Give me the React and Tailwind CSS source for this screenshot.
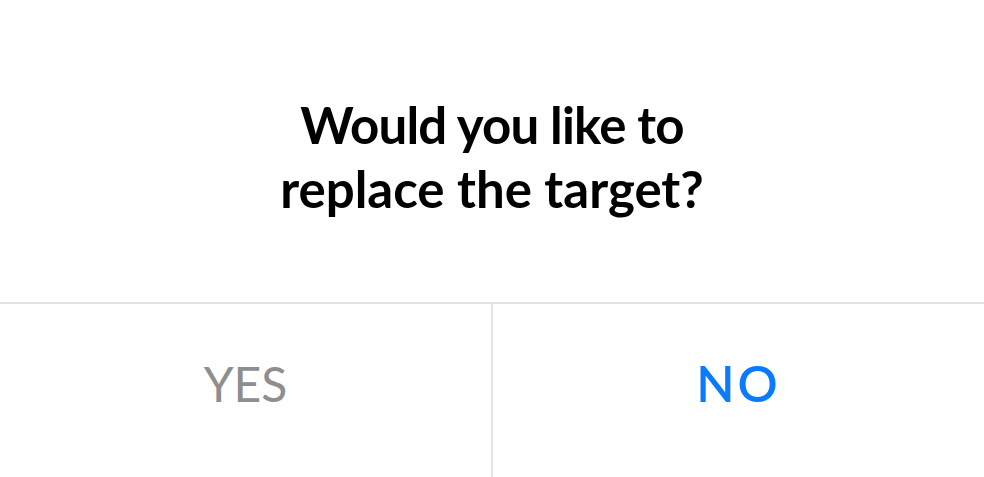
export default function App() {
  return (
    <div className="w-[984px] h-[477px] bg-white overflow-hidden flex flex-col" style={{ fontFamily: 'Lato, "Open Sans", sans-serif' }}>
      <div className="h-[302px] shrink-0 flex items-center justify-center pt-[12px]">
        <h1 className="text-center text-[51px] leading-[64px] font-bold text-black">
          <span className="tracking-[-0.8px]">Would you like to</span>
          <br />
          replace the target?
        </h1>
      </div>
      <div className="flex border-t-2 border-[#e3e3e3] flex-1">
        <button className="flex-1 flex items-center justify-center pb-[14px] text-[48px] text-[#8e8e8e] border-r-2 border-[#e3e3e3]">
          YES
        </button>
        <button className="flex-1 flex items-center justify-center pb-[14px] text-[50px] tracking-[3px] text-[#0a7aff] font-semibold">
          NO
        </button>
      </div>
    </div>
  )
}
